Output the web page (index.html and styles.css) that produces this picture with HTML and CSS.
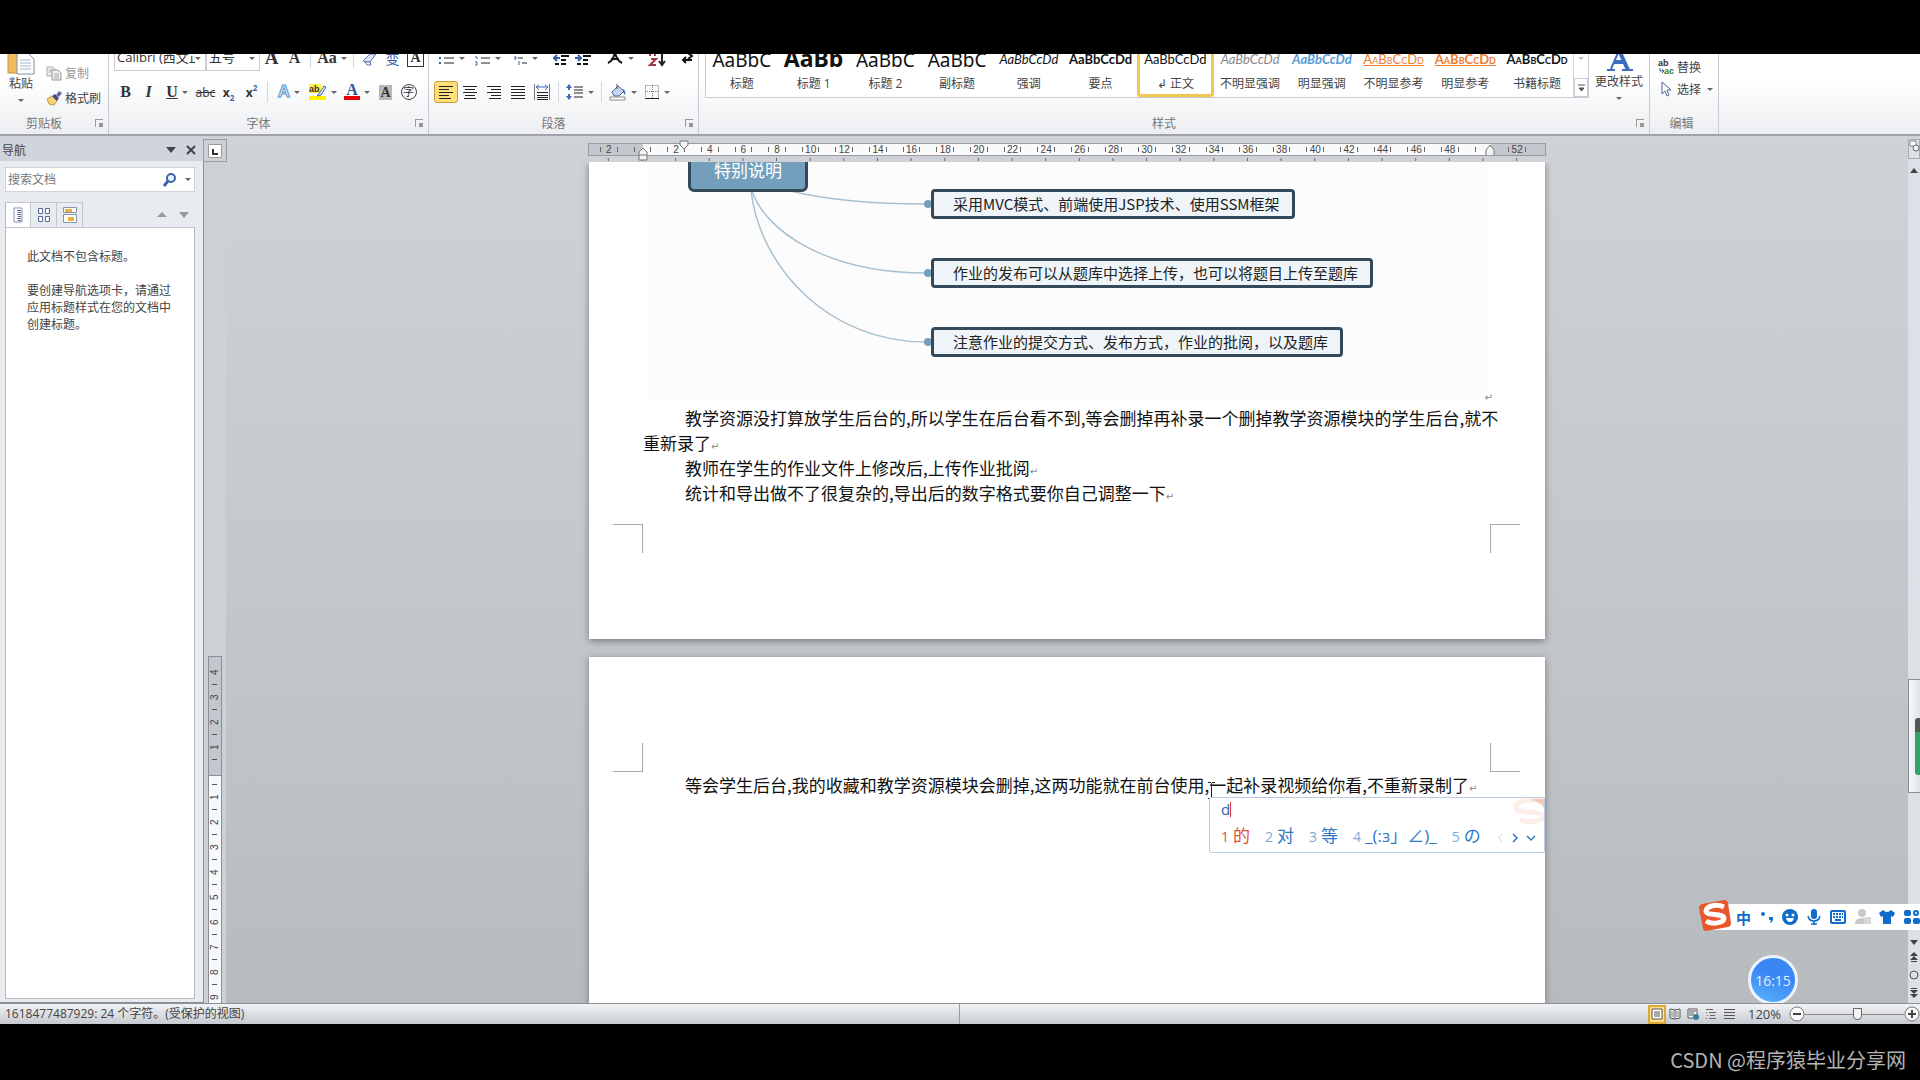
FILE: index.html
```html
<!DOCTYPE html>
<html lang="zh-CN">
<head>
    <meta charset="utf-8">
    <title>1618477487929</title>
    <link rel="stylesheet" href="styles.css">
</head>
<body>
    <header class="ribbon">
        <!-- Clipboard -->
        <section class="group group-clipboard">
            <div class="group-body">
                <button class="big-button">
                    <svg width="28" height="30" viewBox="0 0 28 30"><rect x="1" y="2" width="18" height="26" fill="#f0bd5c" stroke="#c99434"/><path d="M10 8h11l6 6v15H10z" fill="#fff" stroke="#7c8da8"/><path d="M13 15h10M13 18h11M13 21h11M13 24h11" stroke="#9db2d0"/></svg>
                    <span>粘贴</span>
                    <i class="arrow"></i>
                </button>
                <div class="stack">
                    <button class="text-button" aria-label="剪切"><svg width="16" height="16" viewBox="0 0 16 16"><circle cx="5" cy="11" r="2.500" fill="none" stroke="#888"/><circle cx="11" cy="11" r="2.500" fill="none" stroke="#888"/></svg></button>
                    <button class="text-button disabled"><svg width="16" height="16" viewBox="0 0 16 16"><path d="M1 2h6l2 2v7H1z" fill="#eee" stroke="#aaa"/><path d="M6 5h6l3 3v7H6z" fill="#eee" stroke="#999"/><path d="M8 9h5M8 11h5M8 13h5M3 5h3M3 7h2" stroke="#aaa"/></svg>复制</button>
                    <button class="text-button"><svg width="16" height="16" viewBox="0 0 16 16"><path d="M1 9l5-3 5 5-3 4-5-1z" fill="#f3d27a" stroke="#c79a3e"/><path d="M6 6l3-2 4 4-2 3z" fill="#4c4a8c"/><path d="M10 5l3-4 3 2-3 4z" fill="#6a68ad"/></svg>格式刷</button>
                </div>
            </div>
            <div class="group-label"><span>剪贴板</span><button class="launcher" aria-label="剪贴板"></button></div>
        </section>

        <!-- Font -->
        <section class="group group-font">
            <div class="row row-top">
                <div class="combo combo-font"><select aria-label="字体"><option>Calibri (西文正文)</option></select></div>
                <div class="combo combo-size"><select aria-label="字号"><option>五号</option></select></div>
                <button class="tool serif big">A</button>
                <button class="tool serif">A</button>
                <i class="sep"></i>
                <button class="tool wide serif">Aa<i class="arrow"></i></button>
                <i class="sep"></i>
                <button class="tool" aria-label="清除格式"><svg width="18" height="18" viewBox="0 0 18 18"><path d="M2 12l7-7h6l-6 8H4z" fill="#dfe5f3" stroke="#5b72ac"/><path d="M4 13h5l1 3H6z" fill="#fff" stroke="#5b72ac"/></svg></button>
                <button class="tool blue">变</button>
                <button class="tool"><span class="boxed">A</span></button>
            </div>
            <div class="row">
                <button class="tool serif strong">B</button>
                <button class="tool serif italic">I</button>
                <button class="tool wide serif"><u>U</u><i class="arrow"></i></button>
                <button class="tool"><s>abc</s></button>
                <button class="tool strong">x<sub>2</sub></button>
                <button class="tool strong">x<sup>2</sup></button>
                <i class="sep"></i>
                <button class="tool wide"><span class="glow">A</span><i class="arrow"></i></button>
                <button class="tool wide"><svg width="18" height="18" viewBox="0 0 18 18"><rect x="0" y="1" width="12" height="9" fill="#ffef3e"/><rect x="0" y="13" width="17" height="4" fill="#fff200"/><text x="0" y="9" class="tiny">ab</text><path d="M9 12l6-9 2 1-5 8-4 1z" fill="#dbe4f4" stroke="#4a67a5"/></svg><i class="arrow"></i></button>
                <button class="tool wide"><span class="font-color">A</span><i class="arrow"></i></button>
                <button class="tool"><span class="shaded">A</span></button>
                <button class="tool"><span class="circled">字</span></button>
            </div>
            <div class="group-label"><span>字体</span><button class="launcher" aria-label="字体"></button></div>
        </section>

        <!-- Paragraph -->
        <section class="group group-paragraph">
            <div class="row row-top">
                <button class="tool wide"><svg width="16" height="18" viewBox="0 0 16 18"><path d="M5 4h10M5 9h10M5 14h10" stroke="#222"/><path d="M0 4h2M0 9h2M0 14h2" stroke="#3c5ca8" stroke-width="2"/></svg><i class="arrow"></i></button>
                <button class="tool wide"><svg width="16" height="18" viewBox="0 0 16 18"><path d="M6 4h9M6 9h9M6 14h9" stroke="#222"/><path d="M1 2h1v3M0 8h2v2M0 13h2v3h-2" fill="none" stroke="#3c5ca8"/></svg><i class="arrow"></i></button>
                <button class="tool wide"><svg width="18" height="18" viewBox="0 0 18 18"><path d="M4 4h5M8 9h5M12 14h5" stroke="#222"/><path d="M0 4h2M4 8h2v2h-2M9 12v4" fill="none" stroke="#3c5ca8"/></svg><i class="arrow"></i></button>
                <i class="sep"></i>
                <button class="tool"><svg width="17" height="18" viewBox="0 0 17 18"><path d="M2 3h14M8 7h8M8 11h5M2 15h4M8 15h5" stroke="#111" stroke-width="2"/><path d="M7 9H1M4 6L1 9l3 3" fill="none" stroke="#3c5ca8" stroke-width="2"/></svg></button>
                <button class="tool"><svg width="17" height="18" viewBox="0 0 17 18"><path d="M2 3h14M8 7h8M8 11h5M2 15h4M8 15h5" stroke="#111" stroke-width="2"/><path d="M0 9h6M3 6l3 3-3 3" fill="none" stroke="#3c5ca8" stroke-width="2"/></svg></button>
                <i class="sep"></i>
                <button class="tool wide"><svg width="18" height="18" viewBox="0 0 18 18"><path d="M2 14C6 12 8 9 9 3c1 6 3 9 7 11M5 10h8" fill="none" stroke="#111" stroke-width="2"/></svg><i class="arrow"></i></button>
                <i class="sep"></i>
                <button class="tool"><svg width="18" height="20" viewBox="0 0 18 20"><path d="M2 8V3h5v5M3 11h5l-6 6h6" fill="none" stroke="#a33a4a" stroke-width="2"/><path d="M14 3v13M11 13l3 4 3-4" fill="none" stroke="#222" stroke-width="2"/></svg></button>
                <i class="sep"></i>
                <button class="tool"><svg width="16" height="18" viewBox="0 0 16 18"><path d="M5 11h8M7 8l-3 3 3 3M9 4l4 3-4 3" fill="none" stroke="#111" stroke-width="2"/></svg></button>
            </div>
            <div class="row">
                <button class="tool selected"><svg width="16" height="14" viewBox="0 0 16 14"><path d="M1 1.500h14M1 4.500h10M1 7.500h14M1 10.500h10M1 13.500h12" stroke="#222" stroke-width="1"/></svg></button>
                <button class="tool"><svg width="16" height="14" viewBox="0 0 16 14"><path d="M1 1.500h14M3 4.500h10M1 7.500h14M3 10.500h10M2 13.500h12" stroke="#222"/></svg></button>
                <button class="tool"><svg width="16" height="14" viewBox="0 0 16 14"><path d="M1 1.500h14M5 4.500h10M1 7.500h14M5 10.500h10M3 13.500h12" stroke="#222"/></svg></button>
                <button class="tool"><svg width="16" height="14" viewBox="0 0 16 14"><path d="M1 1.500h14M1 4.500h14M1 7.500h14M1 10.500h14M1 13.500h14" stroke="#222"/></svg></button>
                <button class="tool"><svg width="18" height="17" viewBox="0 0 18 17"><path d="M1.500 0v16M16.500 0v16" stroke="#777"/><path d="M3 3h12M6 1L3 3l3 3M12 1l3 2-3 3" fill="none" stroke="#3f67b5"/><path d="M4 8.500h11M4 11.500h11M4 13.500h11M4 15.500h11" stroke="#222"/></svg></button>
                <i class="sep"></i>
                <button class="tool wide"><svg width="18" height="16" viewBox="0 0 18 16"><path d="M3 2v4M3 10v4" stroke="#3f67b5" stroke-width="2"/><path d="M0 4l3-4 3 4zM0 12l3 4 3-4z" fill="#3f67b5"/><path d="M8 3h9M8 6h9M8 9h9M8 13h9" stroke="#222"/></svg><i class="arrow"></i></button>
                <i class="sep"></i>
                <button class="tool wide"><svg width="18" height="18" viewBox="0 0 18 18"><path d="M3 9l6-6 6 5-5 5H5z" fill="#c7d5ee" stroke="#44609c"/><path d="M8 1v5" stroke="#555"/><path d="M14 6c2 1 3 4 2 6l-2-3z" fill="#3f67b5"/><path d="M1 14h15v3H1z" fill="#fff" stroke="#888"/></svg><i class="arrow"></i></button>
                <button class="tool wide"><svg width="16" height="16" viewBox="0 0 16 16"><path d="M1.500 1.500h13v12M1.500 1.500v12M8.500 1v13M1 7.500h14" fill="none" stroke="#777" stroke-dasharray="1 1"/><path d="M1 14.500h14" stroke="#222"/></svg><i class="arrow"></i></button>
            </div>
            <div class="group-label"><span>段落</span><button class="launcher" aria-label="段落"></button></div>
        </section>

        <!-- Styles -->
        <section class="group group-styles">
            <div class="group-body">
                <div class="gallery">
                    <button class="style-item"><span class="sample large">AaBbC</span><span>标题</span></button>
                    <button class="style-item"><span class="sample large heavy">AaBb</span><span>标题 1</span></button>
                    <button class="style-item"><span class="sample large">AaBbC</span><span>标题 2</span></button>
                    <button class="style-item"><span class="sample large">AaBbC</span><span>副标题</span></button>
                    <button class="style-item"><span class="sample slanted">AaBbCcDd</span><span>强调</span></button>
                    <button class="style-item"><span class="sample strong">AaBbCcDd</span><span>要点</span></button>
                    <button class="style-item current"><span class="sample">AaBbCcDd</span><span>↲ 正文</span></button>
                    <button class="style-item"><span class="sample slanted gray">AaBbCcDd</span><span>不明显强调</span></button>
                    <button class="style-item"><span class="sample slanted strong sky">AaBbCcDd</span><span>明显强调</span></button>
                    <button class="style-item"><span class="sample caps orange">AaBbCcDd</span><span>不明显参考</span></button>
                    <button class="style-item"><span class="sample caps strong orange">AaBbCcDd</span><span>明显参考</span></button>
                    <button class="style-item"><span class="sample caps strong">AaBbCcDd</span><span>书籍标题</span></button>
                    <div class="gallery-scroll">
                        <button aria-label="向下"><i class="arrow faint"></i></button>
                        <button aria-label="其他"><svg width="7" height="8" viewBox="0 0 7 8"><path d="M0 1h7M1 4h5L3.500 7z" fill="#555" stroke="#555"/></svg></button>
                    </div>
                </div>
                <button class="big-button change-style">
                    <svg width="30" height="30" viewBox="0 0 30 30"><path d="M2 10L8 1l4 2-5 7z" fill="#a558b5"/><path d="M3 27h8M18 27h11" stroke="#3c6cc0" stroke-width="2"/><path d="M7 26L16 5" fill="none" stroke="#3c6cc0" stroke-width="2"/><path d="M14 5l10 22M10 19h10" fill="none" stroke="#3c6cc0" stroke-width="4"/></svg>
                    <span>更改样式</span>
                    <i class="arrow"></i>
                </button>
            </div>
            <div class="group-label"><span>样式</span><button class="launcher" aria-label="样式"></button></div>
        </section>

        <!-- Editing -->
        <section class="group group-edit">
            <div class="stack">
                <button class="text-button"><svg width="16" height="16" viewBox="0 0 16 16"><text x="0" y="7" class="tiny">ab</text><text x="6" y="15" class="tiny green">ac</text><path d="M2 9v3h4M4 10l2 2-2 2" fill="none" stroke="#3c5ca8"/></svg>替换</button>
                <button class="text-button"><svg width="16" height="16" viewBox="0 0 16 16"><path d="M4 1v12l3-3 2 5 2-1-2-5h4z" fill="#fff" stroke="#4b6396"/></svg>选择<i class="arrow"></i></button>
            </div>
            <div class="group-label"><span>编辑</span></div>
        </section>
    </header>

    <main class="workspace">
        <aside class="nav-pane">
            <div class="nav-title"><span>导航</span><button aria-label="选项"><i class="arrow huge"></i></button><button aria-label="关闭"><svg width="10" height="10" viewBox="0 0 10 10"><path d="M1 1l8 8M9 1L1 9" stroke="#444" stroke-width="2"/></svg></button></div>
            <div class="nav-search">
                <input type="text" placeholder="搜索文档" aria-label="搜索文档">
                <svg width="14" height="14" viewBox="0 0 14 14"><circle cx="8" cy="5" r="4" fill="#eef4fd" stroke="#3c62ab" stroke-width="2"/><path d="M5 8l-4 5" stroke="#3c62ab" stroke-width="3"/></svg>
                <i class="arrow"></i>
            </div>
            <div class="nav-tabs">
                <button class="nav-tab active" aria-label="标题"><svg width="10" height="16" viewBox="0 0 10 16"><path d="M1 1h8v14H1z" fill="#fff" stroke="#8794ae"/><path d="M4 3.500h4M5 5.500h3M4 7.500h4M5 9.500h3M4 11.500h4M5 13.500h3" stroke="#58698c"/></svg></button>
                <button class="nav-tab" aria-label="页面"><svg width="14" height="16" viewBox="0 0 14 16"><path d="M1.500 1.500h4v5h-4zM8.500 1.500h4v5h-4zM1.500 9.500h4v5h-4zM8.500 9.500h4v5h-4z" fill="#fff" stroke="#58698c"/></svg></button>
                <button class="nav-tab" aria-label="结果"><svg width="14" height="16" viewBox="0 0 14 16"><path d="M.5.500h13v5H.5zM.5 7.500h13v8H.5z" fill="#fff" stroke="#8794ae"/><path d="M2 2h7v3H2zM5 10h6v4H5z" fill="#efb03c"/></svg></button>
                <span class="nav-arrows"><i class="arrow huge up"></i><i class="arrow huge pale"></i></span>
            </div>
            <div class="nav-content">
                <p>此文档不包含标题。</p>
                <p>要创建导航选项卡，请通过应用标题样式在您的文档中创建标题。</p>
            </div>
        </aside>

        <div class="ruler-column">
            <button class="tab-select" aria-label="制表符"><svg width="14" height="14" viewBox="0 0 14 14"><path d="M.5.500h13v13H.5z" fill="#fff" stroke="#999"/><path d="M5 5v5h5" fill="none" stroke="#333" stroke-width="2"/></svg></button>
            <div class="v-ruler">
                <span>4</span><span>3</span><span>2</span><span>1</span><span></span><span>1</span><span>2</span><span>3</span><span>4</span><span>5</span><span>6</span><span>7</span><span>8</span><span>9</span>
            </div>
        </div>

        <div class="canvas">
            <div class="ruler-bar">
                <div class="h-ruler">
                    <span>2</span><span></span><span>2</span><span>4</span><span>6</span><span>8</span><span>10</span><span>12</span><span>14</span><span>16</span><span>18</span><span>20</span><span>22</span><span>24</span><span>26</span><span>28</span><span>30</span><span>32</span><span>34</span><span>36</span><span>38</span><span>40</span><span>42</span><span>44</span><span>46</span><span>48</span><span></span><span>52</span>
                    <svg class="marker first-line" width="10" height="12" viewBox="0 0 10 12"><path d="M1 1h8v4l-4 4-4-4z" fill="#f4f4f4" stroke="#777"/></svg>
                    <svg class="marker hanging" width="10" height="14" viewBox="0 0 10 14"><path d="M1 13V5l4-4 4 4v8zM1 8h8" fill="#f4f4f4" stroke="#777"/></svg>
                    <svg class="marker right-indent" width="10" height="12" viewBox="0 0 10 12"><path d="M1 11V6l4-5 4 5v5" fill="#f4f4f4" stroke="#777"/></svg>
                </div>
                <div class="tab-stops"></div>
            </div>

            <div class="pages">
                <article class="page page-first">
                    <figure class="mind-map">
                        <svg class="links" width="839" height="238" viewBox="0 0 839 238">
                            <path d="M142 29C180 38 230 42 278 42M104 29C118 70 180 111 278 111M103 29C112 105 180 180 278 180" fill="none" stroke="#a9c0d0" stroke-width="1.500"/>
                            <circle cx="280" cy="42" r="4" fill="#759fba"/><circle cx="280" cy="111" r="4" fill="#759fba"/><circle cx="280" cy="180" r="4" fill="#759fba"/>
                        </svg>
                        <div class="root-node">特别说明</div>
                        <div class="node node-mvc">采用MVC模式、前端使用JSP技术、使用SSM框架</div>
                        <div class="node node-publish">作业的发布可以从题库中选择上传，也可以将题目上传至题库</div>
                        <div class="node node-submit">注意作业的提交方式、发布方式，作业的批阅，以及题库</div>
                        <span class="return figure-return">↵</span>
                    </figure>
                    <div class="doc-text">
                        <p>教学资源没打算放学生后台的,所以学生在后台看不到,等会删掉再补录一个删掉教学资源模块的学生后台,就不重新录了<span class="return">↵</span></p>
                        <p>教师在学生的作业文件上修改后,上传作业批阅<span class="return">↵</span></p>
                        <p>统计和导出做不了很复杂的,导出后的数字格式要你自己调整一下<span class="return">↵</span></p>
                    </div>
                    <div class="corners corners-bottom"><i></i><i></i></div>
                </article>

                <article class="page page-second">
                    <div class="corners corners-top"><i></i><i></i></div>
                    <div class="doc-text">
                        <p>等会学生后台,我的收藏和教学资源模块会删掉,这两功能就在前台使用,一起补录视频给你看,不重新录制了<span class="return">↵</span></p>
                    </div>
                    <svg class="ibeam" width="9" height="17" viewBox="0 0 9 17"><path d="M1 .5h3M5 .5h3M4.500 1v15M1 16.500h3M5 16.500h3" fill="none" stroke="#222"/></svg>
                    <div class="ime">
                        <svg class="ime-logo" width="40" height="28" viewBox="0 0 40 28"><path d="M40 4C24-1 10 4 12 10s22 2 26 7-8 9-22 5" fill="none" stroke="#fdeee9" stroke-width="5"/><path d="M26 2q8-2 14-1v9q-4-7-14-8z" fill="#f7c8b8"/></svg>
                        <div class="ime-input">d</div>
                        <ol class="candidates">
                            <li class="chosen"><small>1</small>的</li>
                            <li><small>2</small>对</li>
                            <li><small>3</small>等</li>
                            <li><small>4</small>_(:з」∠)_</li>
                            <li><small>5</small>の</li>
                        </ol>
                        <svg class="ime-pager" width="38" height="10" viewBox="0 0 38 10"><path d="M4 1L1 5l3 4" fill="none" stroke="#d5dbe3"/><path d="M15 1l4 4-4 4M29 3l4 4 4-4" fill="none" stroke="#2f78c4" stroke-width="1.500"/></svg>
                    </div>
                </article>
            </div>
        </div>

        <div class="scrollbar">
            <button class="ruler-toggle" aria-label="标尺"><svg width="10" height="14" viewBox="0 0 10 14"><path d="M1 1h6v5H1z" fill="#fff" stroke="#888"/><circle cx="7" cy="8" r="3" fill="#eef4fd" stroke="#666"/></svg></button>
            <i class="arrow up dark"></i>
            <div class="thumb"><div class="meter"></div></div>
            <div class="scroll-buttons">
                <i class="arrow dark"></i>
                <svg width="10" height="12" viewBox="0 0 10 12"><path d="M1 5l4-4 4 4zM1 9l4-4 4 4zM2 10h6v1H2z" fill="#444"/></svg>
                <svg width="10" height="12" viewBox="0 0 10 12"><circle cx="5" cy="6" r="4" fill="none" stroke="#555"/></svg>
                <svg width="10" height="12" viewBox="0 0 10 12"><path d="M1 7l4 4 4-4zM1 3l4 4 4-4zM2 1h6v1H2z" fill="#444"/></svg>
            </div>
        </div>

        <!-- Floating input method bar -->
        <div class="sogou">
            <svg class="sogou-logo" width="34" height="34" viewBox="0 0 34 34"><path d="M4 5l22-4q3 0 4 3l3 20q0 3-3 4L8 32q-3 0-3-3L1 9q0-3 3-4z" fill="#e9562a"/><path d="M26 8c-9-4-18 0-18 4 0 5 17 2 18 7 0 5-12 7-18 3" fill="none" stroke="#fff" stroke-width="5"/></svg>
            <span class="sogou-mode">中</span>
            <svg width="14" height="16" viewBox="0 0 14 16"><circle cx="3" cy="5" r="2" fill="#1a6fc9"/><path d="M9 8h4v3q-1 3-3 3l1-3H9z" fill="#1a6fc9"/></svg>
            <svg width="16" height="16" viewBox="0 0 16 16"><circle cx="8" cy="8" r="8" fill="#0f6ccb"/><circle cx="5" cy="6" r="1.500" fill="#fff"/><circle cx="11" cy="6" r="1.500" fill="#fff"/><path d="M4 9h8q-1 4-4 4t-4-4z" fill="#fff"/></svg>
            <svg width="14" height="16" viewBox="0 0 14 16"><rect x="4" y="0" width="6" height="10" rx="3" fill="#0f6ccb"/><path d="M1 7q1 5 6 5t6-5M7 12v4M4 15h6" fill="none" stroke="#0f6ccb" stroke-width="1.500"/></svg>
            <svg width="16" height="14" viewBox="0 0 16 14"><rect x="1" y="1" width="14" height="12" rx="1" fill="none" stroke="#0f6ccb" stroke-width="2"/><path d="M3 4h10M3 7h10" stroke="#0f6ccb" stroke-width="2" stroke-dasharray="2 1"/><path d="M5 10h6" stroke="#0f6ccb" stroke-width="2"/></svg>
            <svg width="16" height="16" viewBox="0 0 16 16"><circle cx="7" cy="4" r="4" fill="#c9c9c9"/><path d="M0 15q0-6 7-6h2v6z" fill="#c9c9c9"/><rect x="9" y="8" width="7" height="7" fill="#d8d8d8"/></svg>
            <svg width="16" height="14" viewBox="0 0 16 14"><path d="M4 0q4 4 8 0l4 3-2 4-2-1v8H4V6L2 7 0 3z" fill="#0f6ccb"/></svg>
            <svg width="16" height="14" viewBox="0 0 16 14"><rect x="0" y="0" width="7" height="6" rx="2" fill="#0f6ccb"/><circle cx="12" cy="3" r="2" fill="none" stroke="#0f6ccb" stroke-width="2"/><rect x="0" y="8" width="7" height="6" rx="2" fill="#0f6ccb"/><rect x="9" y="8" width="7" height="6" rx="2" fill="#0f6ccb"/></svg>
        </div>
        <time class="clock">16:15</time>
    </main>

    <footer class="status-bar">
        <span class="status-text">1618477487929: 24 个字符。(受保护的视图)</span>
        <span class="status-right">
            <button class="view active" aria-label="页面视图"><svg width="12" height="12" viewBox="0 0 12 12"><path d="M1 1h10v10H1z" fill="#fff" stroke="#555"/><path d="M3 4h6M3 6h6M3 8h6" stroke="#555"/></svg></button>
            <button class="view" aria-label="阅读版式"><svg width="12" height="12" viewBox="0 0 12 12"><path d="M1 1l5 1 5-1v9l-5 1-5-1zM6 2v9" fill="#fff" stroke="#555"/><path d="M2 4h3M2 6h3M2 8h3M7 4h3M7 6h3M7 8h3" stroke="#777"/></svg></button>
            <button class="view" aria-label="Web版式"><svg width="12" height="12" viewBox="0 0 12 12"><path d="M1 1h9v9H1z" fill="#fff" stroke="#555"/><path d="M2 3h7M2 5h5M2 7h5" stroke="#555"/><circle cx="9" cy="9" r="3" fill="#35809c"/></svg></button>
            <button class="view" aria-label="大纲视图"><svg width="12" height="12" viewBox="0 0 12 12"><path d="M1 1.500h7M4 4.500h7M5 7.500h5M4 10.500h7" stroke="#666"/><path d="M1 4.500h1M2 7.500h1M1 10.500h1" stroke="#666"/></svg></button>
            <button class="view" aria-label="草稿"><svg width="12" height="12" viewBox="0 0 12 12"><path d="M1 1.500h11M1 4.500h11M1 7.500h11M1 10.500h11" stroke="#555"/></svg></button>
            <span class="zoom-value">120%</span>
            <button class="zoom-button" aria-label="缩小"><svg width="16" height="16" viewBox="0 0 16 16"><circle cx="8" cy="8" r="7" fill="#fafafa" stroke="#777"/><path d="M4 8h8" stroke="#444" stroke-width="2"/></svg></button>
            <input class="zoom-slider" type="range" min="0" max="100" value="53" aria-label="显示比例">
            <button class="zoom-button" aria-label="放大"><svg width="16" height="16" viewBox="0 0 16 16"><circle cx="8" cy="8" r="7" fill="#fafafa" stroke="#777"/><path d="M4 8h8M8 4v8" stroke="#444" stroke-width="2"/></svg></button>
        </span>
    </footer>

    <div class="watermark">CSDN @程序猿毕业分享网</div>
</body>
</html>
```
FILE: styles.css
```css
* {
    box-sizing: border-box;
}

body {
    margin: 0;
    padding-top: 54px;
    height: 100vh;
    display: flex;
    flex-direction: column;
    overflow: hidden;
    background-color: #000;
    color: #444;
    font-family: "Open Sans", "Noto Sans CJK SC", sans-serif;
    font-size: 12px;
}

button {
    padding: 0;
    border: none;
    background: none;
    color: inherit;
    font: inherit;
    white-space: nowrap;
}

svg {
    flex: none;
}

p {
    margin: 0;
}

/* small triangles used by every menu */
.arrow {
    flex: none;
    display: block;
    width: 0;
    height: 0;
    border: 3px solid transparent;
    border-top-color: #666;
    border-bottom: none;
}

.arrow.faint {
    border-top-color: #bbb;
}

.arrow.dark {
    border-width: 4px;
    border-top-width: 5px;
    border-bottom: none;
    border-top-color: #444;
}

.arrow.huge {
    border-width: 5px;
    border-top-width: 6px;
    border-bottom: none;
    border-top-color: #444;
}

.arrow.pale {
    border-top-color: #999;
}

.arrow.up {
    border-bottom: 5px solid #999;
    border-top: none;
}

/* Ribbon */
.ribbon {
    flex: none;
    height: 82px;
    display: flex;
    overflow: hidden;
    background: linear-gradient(#fff 30%, #eceef1);
    border-bottom: 2px solid #a0a4aa;
}

.group {
    flex: none;
    display: flex;
    flex-direction: column;
    justify-content: flex-end;
    border-right: 1px solid #c8ccd2;
}

.group-clipboard {
    width: 109px;
}

.group-font {
    width: 320px;
}

.group-paragraph {
    width: 270px;
}

.group-styles {
    width: 951px;
}

.group-edit {
    width: 69px;
}

.group-body {
    display: flex;
    align-items: flex-end;
}

.group-label {
    flex: none;
    height: 22px;
    padding-right: 5px;
    display: flex;
    align-items: center;
    color: #777;
}

.group-label span {
    flex: 1;
    text-align: center;
}

.launcher {
    width: 8px;
    height: 8px;
    margin-left: 7px;
    border-left: 1px solid #999;
    border-top: 1px solid #999;
    background: linear-gradient(#999, #999) 3px 3px / 4px 4px no-repeat;
}

.big-button {
    display: flex;
    flex-direction: column;
    align-items: center;
    line-height: 18px;
    padding-bottom: 10px;
}

.big-button .arrow {
    margin-top: 6px;
}

.group-clipboard .big-button {
    width: 42px;
}

.group-styles .change-style {
    width: 60px;
    padding-bottom: 12px;
}

.stack {
    display: flex;
    flex-direction: column;
    align-items: flex-start;
    padding-left: 4px;
    padding-bottom: 2px;
}

.text-button {
    display: flex;
    align-items: center;
    gap: 3px;
    height: 25px;
}

.group-edit .stack {
    padding: 0 0 12px 8px;
}

.group-edit .text-button {
    height: 22px;
}

.text-button .arrow {
    margin-left: 3px;
}

.disabled {
    color: #999;
}

.row {
    flex: none;
    height: 24px;
    margin-bottom: 8px;
    padding-left: 5px;
    display: flex;
    align-items: center;
}

.row-top {
    margin-bottom: 10px;
}

.tool {
    flex: none;
    width: 23px;
    height: 22px;
    display: flex;
    align-items: center;
    justify-content: center;
    color: #333;
}

.tool.wide {
    width: 34px;
    gap: 4px;
}

.group-paragraph .tool {
    width: 24px;
}

.group-paragraph .tool.wide {
    width: 34px;
}

.group-paragraph .row-top .tool {
    width: 22px;
}

.group-paragraph .row-top .tool.wide {
    width: 36px;
}

.tool.selected {
    border: 1px solid #c99a3b;
    border-radius: 3px;
    background-color: #ffdf7b;
}

.tool sub,
.tool sup {
    color: #3c5ca8;
    font-size: 8px;
}

.tool sub {
    margin-top: 10px;
}

.tool sup {
    margin-bottom: 10px;
}

.serif {
    font-family: "Liberation Serif", serif;
    font-size: 16px;
    font-weight: bold;
}

.serif.big {
    font-size: 19px;
}

.strong {
    font-weight: bold;
}

.italic {
    font-style: italic;
}

.blue {
    color: #3c5ca8;
    font-size: 14px;
}

.sep {
    width: 1px;
    height: 20px;
    margin: 0 4px;
    background-color: #d4d7dc;
}

.boxed {
    padding: 0 2px;
    border: 1px solid #333;
    font: bold 14px "Liberation Serif", serif;
}

.glow {
    color: #dcecf8;
    -webkit-text-stroke: 1px #5a9bd0;
    font: bold 17px "Liberation Sans", sans-serif;
}

.font-color {
    height: 16px;
    border-bottom: 4px solid #e60000;
    color: #31559b;
    font: bold 16px/12px "Liberation Serif", serif;
    padding: 0 2px;
}

.shaded {
    padding: 0 1px;
    background-color: #b8b8b8;
    font: bold 14px/15px "Liberation Serif", serif;
}

.circled {
    width: 16px;
    height: 16px;
    border: 1px solid #444;
    border-radius: 50%;
    font-size: 11px;
    line-height: 13px;
}

.tiny {
    font: bold 9px "Liberation Sans", sans-serif;
    fill: #333;
}

.tiny.green {
    fill: #2f7d3a;
}

.combo {
    position: relative;
}

.combo::after {
    content: "";
    position: absolute;
    right: 5px;
    top: 11px;
    border: 3px solid transparent;
    border-top-color: #666;
    border-bottom: none;
}

.combo select {
    width: 100%;
    height: 25px;
    padding: 0 10px 3px 2px;
    appearance: none;
    border: 1px solid #c8ccd2;
    border-radius: 0;
    background-color: #fff;
    color: #333;
    font: 13px "Open Sans", "Noto Sans CJK SC", sans-serif;
}

.combo-font {
    width: 92px;
}

.combo-size {
    width: 54px;
}

/* Style gallery */
.gallery {
    flex: 1;
    height: 60px;
    margin: 0 0 14px 6px;
    display: flex;
    border: 1px solid #c8ccd2;
    background-color: #fff;
}

.style-item {
    flex: 1;
    display: flex;
    flex-direction: column;
    align-items: center;
    justify-content: flex-end;
    padding-bottom: 4px;
    border: 0 solid #efc850;
    line-height: 18px;
}

.style-item.current {
    padding-bottom: 1px;
    border-width: 3px;
    border-radius: 3px;
}

.sample {
    flex: none;
    height: 28px;
    color: #111;
    font: 13px/24px Lato, sans-serif;
}

.sample.large {
    font: 19px/26px "Noto Sans", sans-serif;
}

.sample.heavy {
    font: bold 23px/22px "Noto Sans", sans-serif;
}

.sample.strong {
    font-weight: bold;
}

.sample.slanted {
    font-style: italic;
}

.sample.caps {
    font-variant: small-caps;
}

.sample.gray {
    color: #888;
}

.sample.sky {
    color: #5b9bd5;
}

.sample.orange {
    color: #ed7d31;
    text-decoration: underline;
}

.gallery-scroll {
    width: 15px;
    display: flex;
    flex-direction: column;
    border-left: 1px solid #d4d7dc;
}

.gallery-scroll button {
    flex: 1;
    display: flex;
    align-items: center;
    justify-content: center;
}

.gallery-scroll button + button {
    flex: none;
    height: 19px;
    border: 1px solid #c8ccd2;
}

/* Workspace */
.workspace {
    flex: 1;
    min-height: 0;
    position: relative;
    display: flex;
    overflow: hidden;
    background: linear-gradient(#cfd2d6, #c4c8cc 50%, #b8bbbe);
}

.nav-pane {
    flex: none;
    width: 204px;
    margin-top: 3px;
    padding-bottom: 3px;
    display: flex;
    flex-direction: column;
    border-right: 1px solid #8b9097;
    border-bottom: 1px solid #8b9097;
    background-color: #e8ecf1;
}

.nav-title {
    height: 22px;
    padding: 0 7px 0 2px;
    display: flex;
    align-items: center;
    gap: 10px;
    background-color: #cfd4de;
}

.nav-title span {
    flex: 1;
}

.nav-title svg {
    display: block;
}

.nav-search {
    height: 25px;
    margin: 6px 8px 10px 5px;
    padding: 0 3px 0 2px;
    display: flex;
    align-items: center;
    gap: 8px;
    border: 1px solid #d0d4da;
    background-color: #fff;
}

.nav-search input {
    flex: 1;
    min-width: 0;
    padding: 0;
    border: none;
    background: none;
    font: inherit;
}

.nav-search input::placeholder {
    color: #777;
}

.nav-tabs {
    height: 25px;
    margin: 0 8px 0 5px;
    display: flex;
}

.nav-tab {
    width: 26px;
    display: flex;
    align-items: center;
    justify-content: center;
    border: 1px solid #c4c8ce;
    border-left: none;
    border-bottom: none;
}

.nav-tab.active {
    border-left: 1px solid #b4b8be;
    background-color: #fff;
}

.nav-arrows {
    flex: 1;
    padding-right: 6px;
    display: flex;
    align-items: center;
    justify-content: flex-end;
    gap: 12px;
}

.nav-content {
    flex: 1;
    margin: 0 8px 0 5px;
    padding: 20px 21px;
    border: 1px solid #b4b8be;
    border-top-color: #c4c8ce;
    background-color: #fff;
    line-height: 17px;
}

.nav-content p {
    margin-bottom: 17px;
}

.ruler-column {
    flex: none;
    width: 22px;
    margin-top: 3px;
    display: flex;
    flex-direction: column;
    justify-content: space-between;
    align-items: center;
    background-color: #cdd1d6;
}

.tab-select {
    width: 24px;
    height: 23px;
    display: flex;
    align-items: center;
    justify-content: center;
    border: 1px solid #999da3;
}

.v-ruler {
    width: 14px;
    height: 347px;
    margin-right: 1px;
    padding-top: 3px;
    overflow: hidden;
    border: 1px solid #8b9097;
    border-bottom: none;
    background: linear-gradient(#c4c8ce 118px, #8b9097 118px, #8b9097 119px, #f8f9fa 119px);
    font: 10px/12px "Liberation Sans", sans-serif;
}

.v-ruler span {
    width: 12px;
    height: 25px;
    display: flex;
    align-items: center;
    justify-content: space-between;
    writing-mode: vertical-rl;
    transform: rotate(180deg);
}

.v-ruler span::before {
    content: "";
    width: 5px;
    height: 1px;
    background-color: #555;
}

.v-ruler span::after {
    content: "";
}

.canvas {
    flex: 1;
    min-width: 0;
    display: flex;
    flex-direction: column;
    align-items: center;
}

.ruler-bar {
    flex: none;
    width: 958px;
    height: 26px;
    padding-top: 7px;
}

.h-ruler {
    position: relative;
    height: 13px;
    padding: 0 11px 0 3px;
    display: grid;
    grid-template-columns: repeat(28, 1fr);
    border: 1px solid #999da3;
    background: linear-gradient(90deg, #c4c8ce 54px, #fafafa 54px, #fafafa 902px, #c4c8ce 902px);
    font: 10px/11px "Liberation Sans", sans-serif;
}

.h-ruler span {
    padding: 0 8px;
    display: flex;
    align-items: center;
    justify-content: space-between;
}

.h-ruler span::before,
.h-ruler span::after {
    content: "";
    width: 1px;
    height: 5px;
    background-color: #666;
}

.marker {
    position: absolute;
}

.first-line {
    left: 90px;
    top: -4px;
}

.hanging {
    left: 49px;
    top: 3px;
}

.right-indent {
    left: 896px;
    top: 0;
}

.tab-stops {
    height: 6px;
    margin: 0 12px 0 4px;
    background: linear-gradient(90deg, transparent 16px, #666 16px, #666 17px, transparent 17px) 0 2px / calc(100% / 28) 3px repeat-x;
}

/* Document */
.pages {
    flex: 1;
    min-height: 0;
    width: 100%;
    display: flex;
    flex-direction: column;
    align-items: center;
    gap: 18px;
    overflow: hidden;
}

.page {
    flex: none;
    position: relative;
    width: 956px;
    background-color: #fff;
    box-shadow: 0 2px 7px #74797e;
}

.page-first {
    height: 477px;
}

.page-second {
    height: 400px;
    padding-top: 86px;
}

.mind-map {
    position: relative;
    height: 238px;
    margin: 0 58px 0 59px;
    background-color: #fcfcfc;
    color: #222;
    font-family: "Noto Sans CJK SC", sans-serif;
    font-size: 15px;
}

.links {
    display: block;
}

.root-node {
    position: absolute;
    left: 40px;
    top: -22px;
    width: 120px;
    height: 52px;
    padding-top: 15px;
    border: 3px solid #34495a;
    border-radius: 6px;
    background-color: #739fbd;
    color: #fff;
    font-size: 17px;
    line-height: 24px;
    text-align: center;
}

.node {
    position: absolute;
    left: 283px;
    height: 30px;
    padding: 0 12px 0 19px;
    border: 3px solid #34495a;
    border-radius: 4px;
    background-color: #eef4f8;
    line-height: 23px;
    white-space: nowrap;
}

.node-mvc {
    top: 27px;
}

.node-publish {
    top: 96px;
}

.node-submit {
    top: 165px;
}

.return {
    color: #888;
    font-family: "DejaVu Sans", sans-serif;
    font-size: 10px;
    line-height: 10px;
}

.figure-return {
    position: absolute;
    right: -6px;
    bottom: -3px;
}

.doc-text {
    padding: 5px 40px 0 54px;
    color: #111;
    font-family: "Noto Sans CJK SC", sans-serif;
    font-size: 17px;
    line-height: 25px;
}

.doc-text p {
    text-indent: 42px;
}

.page-second .doc-text {
    padding-top: 0;
}

.corners {
    padding: 0 25px 0 24px;
    display: flex;
    justify-content: space-between;
}

.corners i {
    width: 30px;
    height: 29px;
    border: 0 solid #aaa;
}

.corners i:first-child {
    border-right-width: 1px;
}

.corners i:last-child {
    border-left-width: 1px;
}

.corners-bottom {
    margin-top: 19px;
}

.corners-bottom i {
    border-top-width: 1px;
}

.corners-top i {
    border-bottom-width: 1px;
}

.ibeam {
    position: absolute;
    left: 618px;
    top: 125px;
}

/* Input method window */
.ime {
    position: absolute;
    left: 620px;
    right: 0;
    top: 140px;
    height: 56px;
    padding-left: 11px;
    border: 1px solid #b9cbe2;
    border-radius: 2px;
    background-color: #fff;
}

.ime-logo {
    position: absolute;
    right: 0;
    top: 0;
}

.ime-input {
    width: 10px;
    height: 15px;
    margin-top: 4px;
    border-right: 1px solid #d33;
    color: #2c5fb3;
    font-size: 15px;
    line-height: 14px;
}

.candidates {
    margin: 6px 0 0;
    padding: 0;
    display: flex;
    gap: 15px;
    list-style: none;
    color: #2f78c4;
    font-size: 17px;
    line-height: 26px;
    white-space: nowrap;
}

.candidates small {
    margin-right: 4px;
    color: #7fa8d8;
    font-size: 14px;
}

.candidates .chosen,
.candidates .chosen small {
    color: #e0523e;
}

.ime-pager {
    position: absolute;
    right: 8px;
    top: 35px;
}

/* Right scrollbar */
.scrollbar {
    flex: none;
    width: 12px;
    margin-top: 3px;
    display: flex;
    flex-direction: column;
    align-items: center;
    overflow: hidden;
    background-color: #dde1e7;
}

.ruler-toggle {
    flex: none;
    width: 12px;
    height: 20px;
    margin-bottom: 9px;
    border: 1px solid #aaa;
}

.scrollbar .arrow.up {
    border-bottom-color: #444;
}

.thumb {
    position: relative;
    flex: none;
    width: 12px;
    height: 114px;
    margin-top: 506px;
    border: 1px solid #8b9097;
    border-right: none;
    background: linear-gradient(90deg, #f6f8fb, #dfe3ea);
}

.meter {
    position: absolute;
    right: 0;
    top: 38px;
    width: 5px;
    height: 57px;
    border-radius: 3px 0 0 3px;
    background: linear-gradient(#555 14px, #36a168 14px);
}

.scroll-buttons {
    margin-top: auto;
    padding-bottom: 4px;
    display: flex;
    flex-direction: column;
    align-items: center;
    gap: 6px;
}

/* Floating widgets */
.sogou {
    position: absolute;
    right: 0;
    top: 768px;
    width: 210px;
    height: 26px;
    padding-left: 26px;
    display: flex;
    align-items: center;
    justify-content: space-between;
    background-color: #fff;
    color: #0f6ccb;
}

.sogou-logo {
    position: absolute;
    left: -12px;
    top: -5px;
}

.sogou-mode {
    font-size: 15px;
    font-weight: bold;
}

.clock {
    position: absolute;
    right: 122px;
    bottom: -2px;
    width: 50px;
    height: 50px;
    border: 3px solid #eaf3ff;
    border-radius: 50%;
    background: linear-gradient(200deg, #3a86f5 40%, #58b4fa);
    color: #e4f0ff;
    font-size: 14px;
    line-height: 46px;
    text-align: center;
}

/* Status bar */
.status-bar {
    flex: none;
    height: 21px;
    display: flex;
    align-items: center;
    border-top: 1px solid #8b9097;
    background: linear-gradient(#f2f3f5, #c6cad0);
}

.status-text {
    flex: none;
    width: 50%;
    padding-left: 5px;
    line-height: 20px;
    border-right: 1px solid #999da3;
}

.status-right {
    flex: 1;
    display: flex;
    align-items: center;
    justify-content: flex-end;
}

.view {
    width: 18px;
    height: 19px;
    display: flex;
    align-items: center;
    justify-content: center;
}

.view.active {
    border: 2px solid #d9a93c;
    background-color: #ffe08a;
}

.zoom-value {
    padding: 0 8px 0 10px;
    font-size: 13px;
}

.zoom-button {
    width: 16px;
    height: 16px;
}

.zoom-button svg {
    display: block;
}

.zoom-slider {
    width: 99px;
    height: 16px;
    margin: 0;
    appearance: none;
    background: linear-gradient(#888, #888) center / 100% 1px no-repeat;
}

.zoom-slider::-webkit-slider-thumb {
    appearance: none;
    width: 9px;
    height: 12px;
    border: 1px solid #666;
    border-radius: 1px 1px 5px 5px;
    background-color: #f4f4f4;
}

.watermark {
    flex: none;
    height: 56px;
    padding: 9px 14px 0 0;
    color: #b4b4b4;
    font-family: "Noto Sans CJK SC", sans-serif;
    font-size: 20px;
    line-height: 54px;
    text-align: right;
}
```
